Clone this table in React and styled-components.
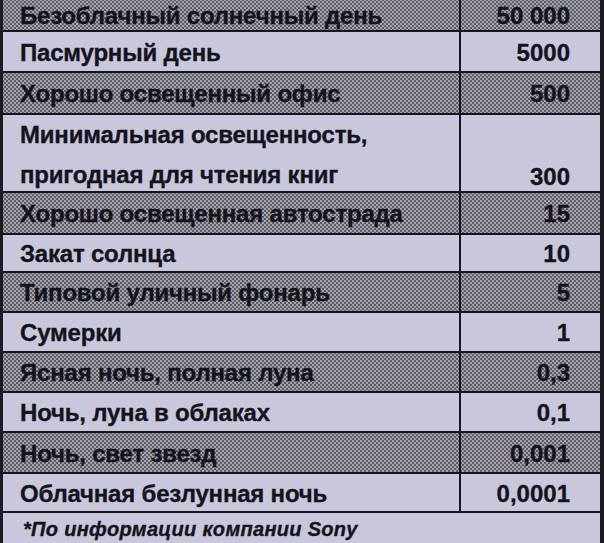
import React from "react";
import styled, { createGlobalStyle } from "styled-components";

const GlobalStyle = createGlobalStyle`
  html, body {
    margin: 0;
    padding: 0;
    background: #1b1b1f;
  }
  body {
    width: 604px;
    height: 543px;
    overflow: hidden;
  }
`;

// h = row height without the 2px rule under it
const rows = [
  { label: "Безоблачный солнечный день", value: "50 000", shaded: true, h: 30 },
  { label: "Пасмурный день", value: "5000", h: 39 },
  { label: "Хорошо освещенный офис", value: "500", shaded: true, h: 40 },
  { label: ["Минимальная освещенность,", "пригодная для чтения книг"], value: "300", h: 76 },
  { label: "Хорошо освещенная автострада", value: "15", shaded: true, h: 40 },
  { label: "Закат солнца", value: "10", h: 36 },
  { label: "Типовой уличный фонарь", value: "5", shaded: true, h: 38 },
  { label: "Сумерки", value: "1", h: 38 },
  { label: "Ясная ночь, полная луна", value: "0,3", shaded: true, h: 38 },
  { label: "Ночь, луна в облаках", value: "0,1", h: 38 },
  { label: "Ночь, свет звезд", value: "0,001", shaded: true, h: 39 },
  { label: "Облачная безлунная ночь", value: "0,0001", h: 37 },
];

const Page = styled.div`
  display: flex;
  height: 543px;
  padding: 0 4px 0 3px;
  box-sizing: border-box;
`;

const Table = styled.div`
  flex: 1;
  display: flex;
  flex-direction: column;
  font-family: "Liberation Sans", Arial, sans-serif;
  font-weight: 700;
  color: #15141d;
  background: #c9c7dc;
  -webkit-text-stroke: 0.35px #15141d;
`;

const halftone =
  "radial-gradient(circle, #5e5d65 1.1px, transparent 1.6px) 0 0 / 4px 4px, " +
  "radial-gradient(circle, #5e5d65 1.1px, transparent 1.6px) 2px 2px / 4px 4px, #aaa9b3";

const Row = styled.div`
  display: grid;
  grid-template-columns: 458px 1fr;
  height: ${(p) => p.$h}px;
  flex-shrink: 0;
  border-bottom: 2px solid #17161f;
  background: ${(p) => (p.$shaded ? halftone : "#c9c7dc")};
`;

const Label = styled.div`
  display: flex;
  flex-direction: column;
  justify-content: center;
  padding-left: 17px;
  padding-top: ${(p) => (p.$tall ? "0" : "2px")};
  border-right: 2px solid #17161f;
  font-size: 24px;
  line-height: ${(p) => (p.$tall ? "40px" : "24px")};
  white-space: nowrap;
  letter-spacing: -0.2px;
`;

const Value = styled.div`
  display: flex;
  align-items: ${(p) => (p.$tall ? "flex-end" : "center")};
  justify-content: flex-end;
  padding-right: 30px;
  padding-top: ${(p) => (p.$tall ? "0" : "2px")};
  padding-bottom: ${(p) => (p.$tall ? "6px" : "0")};
  font-size: 24px;
  line-height: 24px;
  white-space: pre;
`;

const Footnote = styled.div`
  flex: 1;
  display: flex;
  align-items: center;
  padding: 2px 0 0 20px;
  font-size: 20px;
  font-style: italic;
  letter-spacing: 0.3px;
`;

export default function App() {
  return (
    <>
      <GlobalStyle />
      <Page>
        <Table>
          {rows.map((r, i) => {
            const tall = Array.isArray(r.label);
            return (
              <Row key={i} $shaded={r.shaded} $h={r.h}>
                <Label $tall={tall}>
                  {tall ? r.label.map((l) => <span key={l}>{l}</span>) : r.label}
                </Label>
                <Value $tall={tall}>{r.value}</Value>
              </Row>
            );
          })}
          <Footnote>*По информации компании Sony</Footnote>
        </Table>
      </Page>
    </>
  );
}
